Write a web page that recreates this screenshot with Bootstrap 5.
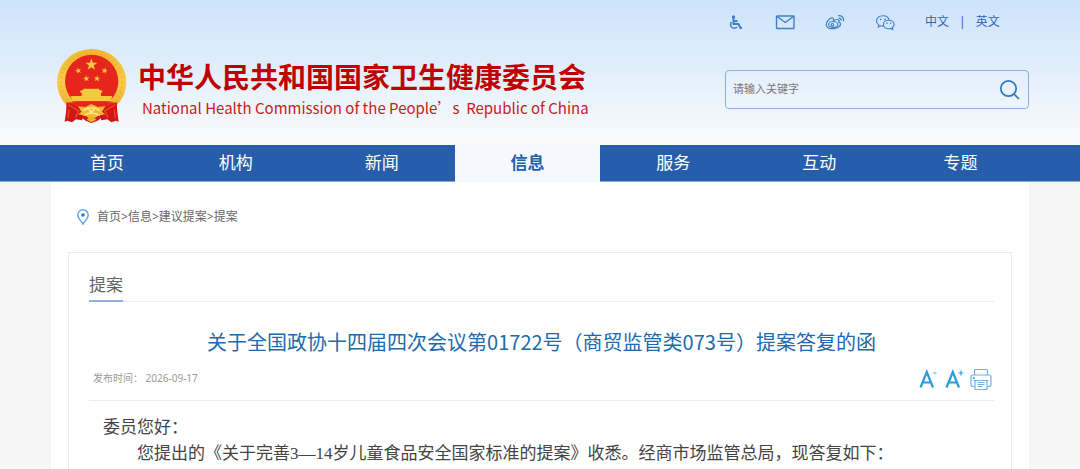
<!DOCTYPE html>
<html lang="zh-CN">
<head>
<meta charset="utf-8">
<meta name="viewport" content="width=device-width, initial-scale=1">
<title>中华人民共和国国家卫生健康委员会</title>
<link href="https://cdn.jsdelivr.net/npm/bootstrap@5.3.0/dist/css/bootstrap.min.css" rel="stylesheet">
<style>
  body { font-family: "Noto Sans", "Noto Sans CJK SC", sans-serif; background: #f6f6f6; color: #666; font-size: 12px; }
  a { color: inherit; text-decoration: none; }
  svg { display: block; }
  .site-wrap { width: 100%; max-width: 978px; margin: 0 auto; }
  .site-header { background: linear-gradient(#cde3fb, #e2effb 50%, #f9fafb 93%, #fafafa); }
  .header-row { min-height: 145px; }
  .emblem { margin: 47px 11px 0 5px; }
  .org-name { margin-top: 59px; color: #c00000; }
  .org-cn { font: 700 28px/34px "Noto Sans CJK SC", sans-serif; margin: 0; }
  .org-en { font: 400 15px/30px "Noto Sans CJK SC", sans-serif; padding-left: 4px; color: #c41c1c; }
  .tools { width: 304px; padding-top: 12px; color: #3f7fc8; }
  .tool-links { gap: 30px; height: 20px; }
  .lang-links { gap: 10px; color: #3365ae; line-height: 20px; }
  .search-box { margin-top: 38px; height: 39px; border: 1px solid #8ab2e2; border-radius: 4px; }
  .search-box input { font-size: 11px; color: #666; padding: 0 7px; background: transparent; }
  .search-box input::placeholder { color: #777; opacity: 1; }
  .search-box button { padding: 0 8px; color: #2b76c4; }
  .main-nav { background: #265eab; border-bottom: 1px solid #86a8d4; }
  .main-nav .site-wrap > a { flex: 146 1 0; padding: 0; line-height: 36px; font-size: 17px; color: #fff; text-align: center; }
  .main-nav .site-wrap > a.first-item { flex-grow: 112; }
  .main-nav .site-wrap > a.last-item { flex-grow: 137; }
  .main-nav .site-wrap > a.active { background: #f5f9fe; color: #265eab; font-weight: 700; margin-bottom: -1px; }
  .crumbs { padding: 25px 26px; gap: 8px; line-height: 20px; }
  .doc-box { margin: 0 17px; padding: 16px 17px 0 20px; border: 1px solid #ebebeb; border-bottom: 0; }
  .doc-section { border-bottom: 1px solid #ececec; }
  .doc-section h2 { font-size: 17px; line-height: 31px; margin: 0 0 -1px; border-bottom: 2px solid #8db2dc; }
  .doc-title { font-size: 20px; line-height: 30px; margin: 25px 0 0; color: #216aaa; font-weight: 400; font-family: "Noto Sans CJK SC", sans-serif; }
  .doc-meta { margin-top: 10px; height: 34px; padding: 0 2px 0 4px; border-bottom: 1px solid #ececec; font-size: 10px; color: #999; }
  .doc-meta button { padding: 0; }
  .doc-text { font: 17px/26px "Liberation Serif", "Noto Sans CJK SC", serif; color: #444; padding: 14px 14px 0; }
  .doc-text p { margin: 0; }
  .doc-text .indented { text-indent: 2em; }
</style>
</head>
<body class="d-flex flex-column min-vh-100">
<header class="site-header">
  <div class="site-wrap header-row d-flex flex-wrap justify-content-between align-items-start">
    <a href="#" class="d-flex align-items-start">
      <svg class="emblem" width="71" height="77" viewBox="18 20 213 231" role="img" aria-label="国徽">
        <defs>
          <linearGradient id="gold" x1="0" y1="0" x2="0" y2="1"><stop offset="0" stop-color="#f2b52c"/><stop offset=".5" stop-color="#f8cc49"/><stop offset="1" stop-color="#eca52a"/></linearGradient>
          <path id="star" d="M0-10 2.4-3.2 9.5-3.1 3.8 1.2 5.9 8.1 0 4-5.9 8.1-3.8 1.2-9.5-3.1-2.4-3.2z"/>
        </defs>
        <ellipse cx="125" cy="126" rx="104" ry="100" fill="url(#gold)"/>
        <ellipse cx="125" cy="126" rx="92" ry="88" fill="none" stroke="#e09a1e" stroke-width="8" stroke-dasharray="5 9" opacity=".3"/>
        <circle cx="125" cy="123" r="80" fill="#e6251c"/>
        <g fill="#f8c83d">
          <use href="#star" transform="translate(124 73) scale(1.9)"/>
          <use href="#star" transform="translate(85 91) rotate(-18)"/>
          <use href="#star" transform="translate(164 91) rotate(18)"/>
          <use href="#star" transform="translate(109 115) rotate(-8)"/>
          <use href="#star" transform="translate(141 115) rotate(8)"/>
          <path d="M100 145h48v4l10 2-2 6H92l-2-6 10-2zM95 156h58v12H95zM62 167h125l-5 16H68z"/>
        </g>
        <path d="M66 184h118" stroke="#d6371a" stroke-width="2"/>
        <path d="M56 186h138l-14 20H70z" fill="#e6251c"/>
        <path d="M50 185 104 211 96 240 78 237 66 246 52 241 44 244 48 215z" fill="#cf1610"/>
        <path d="M200 185 146 211 154 240 172 237 184 246 198 241 206 244 202 215z" fill="#cf1610"/>
        <path d="M55 193 86 212 76 232M195 193 164 212 174 232M57 208l-3 26M193 208l3 26" fill="none" stroke="#ee3d2b" stroke-width="5"/>
        <path d="M84 198l22 2 18-9 20 9 22-2-10 16 9 8-25 5-15 15-17-15-23-5 9-8z" fill="#f4b833"/>
        <path d="M100 210q24-16 49 0M104 224q20-12 41 0M113 202l11 14 12-14" fill="none" stroke="#ffe68b" stroke-width="5"/>
        <path d="M92 230q13-8 20 0l12 10 14-10q8-8 19 0l-14 11-19 7-17-7z" fill="#cf1c12"/>
        <path d="M110 238l14-14 15 14-15 8z" fill="#f0ad2a"/>
      </svg>
      <div class="org-name">
        <h1 class="org-cn">中华人民共和国国家卫生健康委员会</h1>
        <div class="org-en" lang="en">National Health Commission of the People’s&nbsp; Republic of China</div>
      </div>
    </a>
    <div class="tools">
      <div class="tool-links d-flex align-items-center">
        <a href="#" aria-label="无障碍"><svg width="20" height="20" viewBox="0 0 20 20" fill="none" stroke="currentColor" stroke-width="2"><circle cx="8.500" cy="5" r="1.700" fill="currentColor" stroke="none"/><path d="M8.500 6v6h5l2 4h1.500M8.500 9h4"/><path d="M6.500 10a3.700 3.700 0 1 0 5.500 5" stroke-width="1.500"/></svg></a>
        <a href="#" aria-label="邮箱"><svg width="20" height="20" viewBox="0 0 20 20" fill="none" stroke="currentColor" stroke-width="1.400"><rect x="1.500" y="4" width="17.500" height="12.500" rx=".6"/><path d="M2 4.500l8.300 6L18.500 4.500"/></svg></a>
        <a href="#" aria-label="微博"><svg width="20" height="20" viewBox="0 0 20 20" fill="none" stroke="currentColor" stroke-width="1.200"><path d="M8.500 7.500C8.500 4.800 5.500 5.600 3.500 8 1.500 10.200.8 12 1.500 13.700c1.100 2.400 4.500 3.200 7.500 2.900 3.800-.4 7-2.700 6.500-5-.2-1-.9-1.200-1.700-1.400.7-1.400.3-2.600-1.500-2.700-1.200-.1-2.400.4-3.800 1z"/><ellipse cx="8.200" cy="12.500" rx="4.600" ry="3"/><circle cx="7.500" cy="12.800" r="1.300"/><path d="M13.200 3.700c3.500-.6 6 2 5.300 5.500M13.700 6.200c1.700-.2 2.700.8 2.500 2.500"/></svg></a>
        <a href="#" aria-label="微信"><svg width="20" height="20" viewBox="0 0 20 20" fill="none" stroke="currentColor" stroke-width="1.100"><path d="M14 8c-.4-2.700-3-4.300-6-4.300-3.600 0-6.500 2.200-6.500 5.200 0 1.700.9 3 2.300 4L3.200 15l2.500-1.200c.8.200 1.600.4 2.500.3"/><path d="M13.700 8.200c-3 0-5.300 1.900-5.300 4.300s2.400 4.200 5.300 4.200c.7 0 1.400-.1 2-.3l2 1-.5-1.700c1.200-.8 1.900-1.900 1.900-3.200 0-2.400-2.400-4.300-5.400-4.300z"/><g fill="currentColor" stroke="none"><circle cx="5.700" cy="7.300" r=".9"/><circle cx="10" cy="7.300" r=".9"/><circle cx="12" cy="11.300" r=".8"/><circle cx="15.600" cy="11.300" r=".8"/></g></svg></a>
        <div class="lang-links d-flex"><a href="#">中文</a><span>|</span><a href="#" lang="zh">英文</a></div>
      </div>
      <form class="search-box d-flex align-items-center">
        <input class="form-control border-0 shadow-none" type="text" placeholder="请输入关键字" aria-label="请输入关键字">
        <button class="btn border-0" type="button" aria-label="搜索"><svg width="21" height="21" viewBox="0 0 21 21" fill="none" stroke="currentColor" stroke-width="1.700"><circle cx="9.500" cy="9.500" r="7.700"/><path d="M15 15l5 5"/></svg></button>
      </form>
    </div>
  </div>
</header>
<nav class="main-nav">
  <div class="site-wrap d-flex">
    <a href="#" class="first-item">首页</a>
    <a href="#">机构</a>
    <a href="#">新闻</a>
    <a href="#" class="active" aria-current="page">信息</a>
    <a href="#">服务</a>
    <a href="#">互动</a>
    <a href="#" class="last-item">专题</a>
  </div>
</nav>
<main class="site-wrap bg-white d-flex flex-column flex-grow-1">
  <nav class="crumbs d-flex align-items-center" aria-label="当前位置">
    <svg width="12" height="16" viewBox="0 0 12 16" fill="none" stroke="#5ba3df" stroke-width="1.400"><path d="M6 15C3.500 11.500.8 9 .8 5.900a5.200 5.200 0 0 1 10.400 0C11.200 9 8.500 11.500 6 15z"/><circle cx="6" cy="6" r="1.800" fill="#1f7ed0" stroke="none"/></svg>
    <div><a href="#">首页</a>&gt;<a href="#">信息</a>&gt;<a href="#">建议提案</a>&gt;<a href="#">提案</a></div>
  </nav>
  <article class="doc-box flex-grow-1">
    <div class="doc-section d-flex"><h2 class="fw-normal">提案</h2></div>
    <h2 class="doc-title text-center">关于全国政协十四届四次会议第01722号（商贸监管类073号）提案答复的函</h2>
    <div class="doc-meta d-flex align-items-start justify-content-between">
      <div class="pt-1">发布时间： <time datetime="2026-09-17">2026-09-17</time></div>
      <div class="d-flex gap-1">
        <button class="btn border-0" type="button" aria-label="缩小字号"><svg width="22" height="24" viewBox="0 0 22 24" fill="none" stroke="#2b9bdd"><path d="M2.500 20.500 8.800 5l6.200 15.500M4.500 15.500h8.500" stroke-width="2.200"/><path d="M15.500 6h3" stroke-width="1"/></svg></button>
        <button class="btn border-0" type="button" aria-label="放大字号"><svg width="22" height="24" viewBox="0 0 22 24" fill="none" stroke="#2b9bdd"><path d="M2.500 20.500 8.800 5l6.200 15.500M4.500 15.500h8.500" stroke-width="2.200"/><path d="M14.500 6h5M17 3.500v5" stroke-width="1.200"/></svg></button>
        <button class="btn border-0" type="button" aria-label="打印"><svg width="22" height="24" viewBox="0 0 22 24" fill="none" stroke="#6fb0e0" stroke-width="1.200"><path d="M4.500 8V3.500q0-1 1-1h11q1 0 1 1V8M4.500 19.500H3q-2 0-2-2V10q0-2 2-2h16q2 0 2 2v7.500q0 2-2 2h-1.500"/><path d="M3.500 13.500h15M5 13.500v9h12v-9"/><path d="M7.500 15.500h7M7.500 17.500h7M7.500 19.500h5" stroke-width="1"/><circle cx="3.800" cy="11" r=".6"/></svg></button>
      </div>
    </div>
    <div class="doc-text">
      <p>委员您好：</p>
      <p class="indented">您提出的《关于完善3—14岁儿童食品安全国家标准的提案》收悉。经商市场监管总局，现答复如下：</p>
    </div>
  </article>
</main>
<script src="https://cdn.jsdelivr.net/npm/bootstrap@5.3.0/dist/js/bootstrap.bundle.min.js"></script>
</body>
</html>
